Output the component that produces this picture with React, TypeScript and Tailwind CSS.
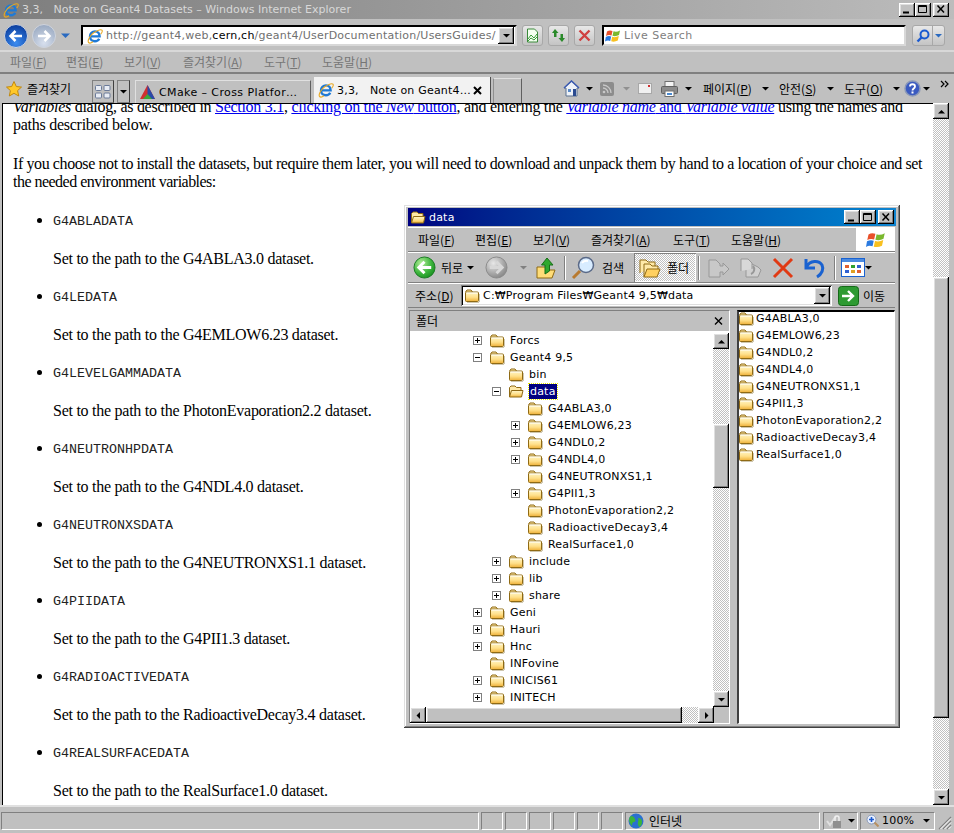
import React from "react";

const ui = "font-['DejaVu_Sans','Noto_Sans_CJK_KR',sans-serif] text-[11px] tracking-[0.2px] whitespace-nowrap leading-none";
const ko = "font-['Noto_Sans_CJK_KR','DejaVu_Sans',sans-serif] text-[12px] whitespace-nowrap leading-none";
const raised = "shadow-[inset_-1px_-1px_0_#000,inset_1px_1px_0_#fff,inset_-2px_-2px_0_#808080,inset_2px_2px_0_#dfdfdf] bg-[#c0c0c0]";
const sunken = "shadow-[inset_1px_1px_0_#808080,inset_-1px_-1px_0_#fff,inset_2px_2px_0_#000,inset_-2px_-2px_0_#dfdfdf]";
const checker = "bg-[repeating-conic-gradient(#c0c0c0_0_25%,#fff_0_50%)] bg-[length:2px_2px]";

function Folder({ open = false, className = "" }: { open?: boolean; className?: string }) {
  return (
    <svg width="16" height="15" viewBox="0 0 16 15" className={"shrink-0 " + className}>
      <defs>
        <linearGradient id="fg" x1="0" y1="0" x2="0" y2="1">
          <stop offset="0" stopColor="#fff6c8" />
          <stop offset="0.55" stopColor="#ffe08a" />
          <stop offset="1" stopColor="#eeb038" />
        </linearGradient>
      </defs>
      {open ? (
        <>
          <path d="M1.500 13V3.500L3 2h4l1.500 1.500H13V6" fill="#ffe9a8" stroke="#8f6a14" />
          <path d="M1.500 13L3.500 6.500H15L13.500 13Z" fill="url(#fg)" stroke="#8f6a14" />
        </>
      ) : (
        <>
          <path d="M1.500 4L3 2h4l1.500 2" fill="#ffe9a8" stroke="#8f6a14" />
          <rect x="1.500" y="4" width="13" height="9.500" rx="1" fill="url(#fg)" stroke="#8f6a14" />
          <path d="M2.500 5h11" stroke="#fff" />
          <path d="M15.500 6v8M3 14.500h12" stroke="#a09060" strokeOpacity="0.5" />
        </>
      )}
    </svg>
  );
}

function IeLogo({ size = 16 }: { size?: number }) {
  return (
    <svg width={size} height={size} viewBox="0 0 16 16" className="shrink-0">
      <path d="M3.400 8.400h9.200c0-3-1.800-5-4.600-5S3 5.600 3 8.500s2 4.800 4.900 4.800c2 0 3.500-.9 4.300-2.500" fill="none" stroke="#1f7ad6" strokeWidth="2.400" />
      <path d="M1.500 14.500C.3 12.500 3 7 7 4.500S14 1 15 2.200c.7 1-.1 2.600-1.300 4M1.500 14.500c1 1 3 .4 4.500-.7" fill="none" stroke="#e8a820" strokeWidth="1.100" />
    </svg>
  );
}

function Flag({ size = 16 }: { size?: number }) {
  return (
    <svg width={size} height={size} viewBox="0 0 16 16" className="shrink-0">
      <path d="M2 3.500Q4.500 2 7.500 3L6.500 7.500Q3.500 6.500 1 8Z" fill="#e8502a" />
      <path d="M8.500 3.300Q11.500 4.500 15 2.500L14 7Q11 8.800 7.500 7.800Z" fill="#7ab82e" />
      <path d="M.8 9Q3.500 7.500 6.200 8.500L5.200 13Q2.500 12 0 13.500Z" fill="#2a7ae0" />
      <path d="M7.200 8.800Q10.500 9.800 13.800 8L12.800 12.500Q9.500 14.300 6.200 13.300Z" fill="#f8c020" />
    </svg>
  );
}

function Tri({ dir = "down", color = "#000", size = 7 }: { dir?: "up" | "down" | "left" | "right"; color?: string; size?: number }) {
  const d = { down: "M0 2h7L3.500 5.500Z", up: "M0 5.500h7L3.500 2Z", left: "M5 0v7L1.500 3.500Z", right: "M2 0v7l3.500-3.500Z" }[dir];
  return (
    <svg width={size} height={size} viewBox="0 0 7 7" className="shrink-0">
      <path d={d} fill={color} />
    </svg>
  );
}

function SBtn({ dir, w = 16, h = 16 }: { dir: "up" | "down" | "left" | "right"; w?: number; h?: number }) {
  return (
    <div className={raised + " shrink-0 flex items-center justify-center"} style={{ width: w, height: h }}>
      <Tri dir={dir} />
    </div>
  );
}

function CapBtn({ kind }: { kind: "min" | "max" | "close" }) {
  return (
    <div className={raised + " w-[16px] h-[14px] flex items-center justify-center"}>
      <svg width="10" height="9" viewBox="0 0 10 9">
        {kind === "min" && <path d="M1 7.500h6" stroke="#000" strokeWidth="2" />}
        {kind === "max" && <path d="M.5.500h8v7h-8zM.5 1.500h8" fill="none" stroke="#000" />}
        {kind === "close" && <path d="M1.500 .5l6.500 7M8 .5l-6.500 7" stroke="#000" strokeWidth="1.500" />}
      </svg>
    </div>
  );
}

function PlusBox({ minus = false }: { minus?: boolean }) {
  return (
    <svg width="9" height="9" viewBox="0 0 9 9" className="shrink-0">
      <rect x=".5" y=".5" width="8" height="8" fill="#fff" stroke="#808080" />
      <path d={minus ? "M2 4.500h5" : "M2 4.500h5M4.500 2v5"} stroke="#000" />
    </svg>
  );
}

function Circle({ green, dirRight = false, size = 23 }: { green: boolean; dirRight?: boolean; size?: number }) {
  const id = green ? "cg" : "cgr";
  return (
    <svg width={size} height={size} viewBox="0 0 24 24" className="shrink-0">
      <defs>
        <radialGradient id={id} cx="0.35" cy="0.3" r="0.8">
          <stop offset="0" stopColor={green ? "#b4ee9a" : "#e8e8e8"} />
          <stop offset="0.6" stopColor={green ? "#3cb43c" : "#a8a8a8"} />
          <stop offset="1" stopColor={green ? "#148a1c" : "#808080"} />
        </radialGradient>
      </defs>
      <circle cx="12" cy="12" r="11" fill={"url(#" + id + ")"} stroke={green ? "#1a7a22" : "#8a8a8a"} />
      <path d={dirRight ? "M5 12h13M12 6l6 6-6 6" : "M19 12H6M12 6l-6 6 6 6"} fill="none" stroke={green ? "#fff" : "#d8d8d8"} strokeWidth="3" />
    </svg>
  );
}

function IeNav({ right = false }: { right?: boolean }) {
  const id = right ? "nr" : "nl";
  return (
    <svg width="24" height="24" viewBox="0 0 24 24" className="shrink-0">
      <defs>
        <radialGradient id={id} cx="0.5" cy="0.8" r="0.8">
          <stop offset="0" stopColor={right ? "#d8e0ee" : "#3c8cf0"} />
          <stop offset="1" stopColor={right ? "#98a8c0" : "#0a3c9c"} />
        </radialGradient>
      </defs>
      <circle cx="12" cy="12" r="11.500" fill={"url(#" + id + ")"} stroke="#d0d4dc" />
      <path d={right ? "M6 12h11M12.500 7l5 5-5 5" : "M18 12H7M11.500 7l-5 5 5 5"} fill="none" stroke="#fff" strokeWidth="2.500" />
    </svg>
  );
}

const SmallBtn = ({ children, className = "" }: { children: React.ReactNode; className?: string }) => (
  <div className={"w-[21px] h-[21px] rounded-[3px] border border-[#a8a8a8] bg-gradient-to-b from-[#e8e8e8] to-[#c4c4c4] flex items-center justify-center shrink-0 " + className}>
    {children}
  </div>
);

function Acc({ a, k }: { a: string; k: string }) {
  return <>{a}(<u className="underline-offset-1">{k}</u>)</>;
}

type Row = { n: string; l: number; b?: "p" | "m"; open?: boolean; sel?: boolean };
const rows: Row[] = [
  { n: "Forcs", l: 0, b: "p" },
  { n: "Geant4 9,5", l: 0, b: "m" },
  { n: "bin", l: 1 },
  { n: "data", l: 1, b: "m", open: true, sel: true },
  { n: "G4ABLA3,0", l: 2 },
  { n: "G4EMLOW6,23", l: 2, b: "p" },
  { n: "G4NDL0,2", l: 2, b: "p" },
  { n: "G4NDL4,0", l: 2, b: "p" },
  { n: "G4NEUTRONXS1,1", l: 2 },
  { n: "G4PII1,3", l: 2, b: "p" },
  { n: "PhotonEvaporation2,2", l: 2 },
  { n: "RadioactiveDecay3,4", l: 2 },
  { n: "RealSurface1,0", l: 2 },
  { n: "include", l: 1, b: "p" },
  { n: "lib", l: 1, b: "p" },
  { n: "share", l: 1, b: "p" },
  { n: "Geni", l: 0, b: "p" },
  { n: "Hauri", l: 0, b: "p" },
  { n: "Hnc", l: 0, b: "p" },
  { n: "INFovine", l: 0 },
  { n: "INICIS61", l: 0, b: "p" },
  { n: "INITECH", l: 0, b: "p" },
];
const files = ["G4ABLA3,0", "G4EMLOW6,23", "G4NDL0,2", "G4NDL4,0", "G4NEUTRONXS1,1", "G4PII1,3", "PhotonEvaporation2,2", "RadioactiveDecay3,4", "RealSurface1,0"];

const datasets = [
  ["G4ABLADATA", "G4ABLA3.0"],
  ["G4LEDATA", "G4EMLOW6.23"],
  ["G4LEVELGAMMADATA", "PhotonEvaporation2.2"],
  ["G4NEUTRONHPDATA", "G4NDL4.0"],
  ["G4NEUTRONXSDATA", "G4NEUTRONXS1.1"],
  ["G4PIIDATA", "G4PII1.3"],
  ["G4RADIOACTIVEDATA", "RadioactiveDecay3.4"],
  ["G4REALSURFACEDATA", "RealSurface1.0"],
];

const menuItems: [string, string][] = [["파일", "F"], ["편집", "E"], ["보기", "V"], ["즐겨찾기", "A"], ["도구", "T"], ["도움말", "H"]];
const winMenuW = ["ml-[10px] w-[57px]", "w-[58px]", "w-[58px]", "w-[82px]", "w-[58px]", "w-[70px]"];
const topMenuW = ["ml-[10px] w-[56px]", "w-[58px]", "w-[59px]", "w-[81px]", "w-[58px]", ""];

function Explorer() {
  return (
    <div className={"absolute left-[404px] top-[205px] w-[496px] h-[523px] pt-[3px] pr-[5px] pl-[4px] flex flex-col bg-[#c0c0c0] shadow-[inset_-1px_-1px_0_#404040,inset_1px_1px_0_#dfdfdf,inset_-2px_-2px_0_#808080,inset_2px_2px_0_#fff]"}>
      <div className="h-[18px] shrink-0 -mr-[1px] flex items-center bg-gradient-to-r from-[#000080] to-[#1084d0] pl-[2px] pr-[2px]">
        <Folder open />
        <span className={ui + " ml-[3px] text-white"}>data</span>
        <div className="ml-auto flex items-center">
          <CapBtn kind="min" />
          <CapBtn kind="max" />
          <div className="w-[2px]" />
          <CapBtn kind="close" />
        </div>
      </div>
      <div className="h-[25px] mt-[1px] shrink-0 flex items-center border-t border-t-white border-b border-b-[#808080]">
        {menuItems.map(([t, k], i) => (
          <span key={t} className={ko + " text-[#000] " + winMenuW[i]}><Acc a={t} k={k} /></span>
        ))}
        <div className="ml-auto w-[39px] h-full bg-white flex items-center justify-center">
          <Flag size={20} />
        </div>
      </div>
      <div className="h-[31px] shrink-0 flex items-center border-t border-t-white border-b border-b-[#808080] pl-[5px]">
        <Circle green />
        <span className={ko + " ml-[5px] w-[26px]"}>뒤로</span>
        <Tri />
        <div className="ml-[11px]"><Circle green={false} dirRight /></div>
        <div className="ml-[12px]"><Tri color="#808080" /></div>
        <svg width="22" height="24" viewBox="0 0 22 24" className="ml-[8px] shrink-0">
          <path d="M2 22V11h12v3h6l-3 8Z" fill="#ffdd78" stroke="#8f6a14" />
          <path d="M10 18V9H6.500L12 2l6 7h-3.500v6Z" fill="#2fa82f" stroke="#176f17" />
        </svg>
        <div className="ml-[7px] w-px h-[24px] bg-[#808080] border-r border-r-white box-content" />
        <svg width="25" height="25" viewBox="0 0 25 25" className="ml-[5px] shrink-0">
          <path d="M9 16L2 23" stroke="#b87a30" strokeWidth="3" />
          <circle cx="15" cy="10" r="7.500" fill="#d8ecff" stroke="#5a6a88" strokeWidth="1.500" />
          <path d="M11 8q2-3 6-2" stroke="#fff" strokeWidth="2" fill="none" />
        </svg>
        <span className={ko + " ml-[6px] w-[32px]"}>검색</span>
        <div className={"h-[29px] w-[62px] flex items-center pl-[4px] shadow-[inset_1px_1px_0_#808080,inset_-1px_-1px_0_#fff] " + checker}>
          <svg width="23" height="21" viewBox="0 0 23 21" className="shrink-0">
            <path d="M2 16V3h6l2 2h7v4" fill="#ffe9a8" stroke="#8f6a14" />
            <path d="M6 20V7h6l2 2h6v3" fill="#ffe9a8" stroke="#8f6a14" />
            <path d="M6 20l3-8h13l-3 8Z" fill="#ffd060" stroke="#8f6a14" />
          </svg>
          <span className={ko + " ml-[6px]"}>폴더</span>
        </div>
        <div className="ml-[2px] w-px h-[24px] bg-[#808080] border-r border-r-white box-content" />
        <svg width="23" height="22" viewBox="0 0 23 22" className="ml-[7px] shrink-0">
          <path d="M2 20V3h7l4 4v2h3v-3l6 6-6 6v-3H13v5Z" fill="#c8c8c8" stroke="#989898" />
        </svg>
        <svg width="23" height="22" viewBox="0 0 23 22" className="ml-[9px] shrink-0">
          <path d="M7 20V7h6l6 3 3 3-3 7Z" fill="#d0d0d0" stroke="#989898" />
          <path d="M2 14V2h7l4 4v6" fill="#d8d8d8" stroke="#989898" />
          <path d="M14 9a5 5 0 0 1-2 8" fill="none" stroke="#989898" strokeWidth="2" />
        </svg>
        <svg width="22" height="22" viewBox="0 0 22 22" className="ml-[10px] shrink-0">
          <path d="M2 2l18 18M20 2L2 20" stroke="#e03a14" strokeWidth="3" />
        </svg>
        <svg width="23" height="22" viewBox="0 0 23 22" className="ml-[9px] shrink-0">
          <path d="M3 2v9h9M3.500 10C7 3 16 3 19 8c2 4 0 9-5 12" fill="none" stroke="#1a62d0" strokeWidth="3" />
        </svg>
        <div className="ml-[8px] w-px h-[24px] bg-[#808080] border-r border-r-white box-content" />
        <svg width="24" height="20" viewBox="0 0 24 20" className="ml-[5px] shrink-0">
          <rect x=".5" y=".5" width="23" height="18" fill="#fff" stroke="#1a62d0" />
          <rect x="1" y="1" width="22" height="3" fill="#4a8ae0" />
          <path d="M4 7h4v3H4z" fill="#e06030" /><path d="M10 7h4v3h-4z" fill="#30a030" /><path d="M16 7h4v3h-4z" fill="#3060d0" />
          <path d="M4 12h4v3H4z" fill="#3060d0" /><path d="M10 12h4v3h-4z" fill="#e0a020" /><path d="M16 12h4v3h-4z" fill="#e06030" />
        </svg>
        <Tri />
      </div>
      <div className="h-[25px] shrink-0 flex items-center border-t border-t-white border-b border-b-[#808080] pl-[7px]">
        <span className={ko + " w-[46px]"}><Acc a="주소" k="D" /></span>
        <div className={sunken + " bg-white w-[371px] h-[21px] flex items-center pl-[3px] pr-[2px]"}>
          <Folder />
          <span className={ui + " ml-[3px] text-[#000]"}>C:₩Program Files₩Geant4 9,5₩data</span>
          <div className="ml-auto"><SBtn dir="down" w={16} h={17} /></div>
        </div>
        <svg width="21" height="20" viewBox="0 0 21 20" className="ml-[6px] shrink-0">
          <rect x=".5" y=".5" width="20" height="19" rx="3" fill="#2e9a32" stroke="#156a18" />
          <path d="M4 10h11M10 5l5 5-5 5" fill="none" stroke="#fff" strokeWidth="2.400" />
        </svg>
        <span className={ko + " ml-[4px]"}>이동</span>
      </div>
      <div className="flex-1 min-h-0 flex pl-px pt-[2px]">
        <div className={"w-[321px] h-[414px] flex flex-col border border-[#808080] border-r-white border-b-white"}>
          <div className="h-[20px] shrink-0 flex items-center pl-[6px] pr-[6px]">
            <span className={ko}>폴더</span>
            <svg width="9" height="8" viewBox="0 0 9 8" className="ml-auto">
              <path d="M1 .5l7 7M8 .5l-7 7" stroke="#000" strokeWidth="1.400" />
            </svg>
          </div>
          <div className="flex-1 min-h-0 flex bg-white overflow-hidden">
            <div className="flex-1 pt-px overflow-hidden">
              {rows.map((r) => (
                <div key={r.n} className="h-[17px] flex items-center" style={{ paddingLeft: 63 + r.l * 19 }}>
                  <div className="w-[16px] shrink-0 flex">{r.b && <PlusBox minus={r.b === "m"} />}</div>
                  <Folder open={r.open} />
                  <span className={ui + " ml-[5px] " + (r.sel ? "bg-[#000080] text-white outline-1 outline-dotted outline-[#e8e800] px-[1px] py-[2px]" : "text-[#000]")}>{r.n}</span>
                </div>
              ))}
            </div>
            <div className="w-[16px] shrink-0 flex flex-col">
              <div className="h-[2px]" />
              <SBtn dir="up" />
              <div className={checker + " h-[75px]"} />
              <div className={raised + " h-[64px]"} />
              <div className={checker + " flex-1"} />
              <SBtn dir="down" />
            </div>
          </div>
          <div className="h-[16px] shrink-0 flex">
            <SBtn dir="left" />
            <div className={raised + " w-[256px]"} />
            <div className={checker + " w-[16px]"} />
            <SBtn dir="right" />
            <div className="flex-1 bg-[#c0c0c0]" />
          </div>
        </div>
        <div className="w-[7px] shrink-0" />
        <div className={"w-[158px] h-[414px] bg-white border-t-2 border-l-2 border-t-[#000] border-l-[#404040] border-r border-b border-r-white border-b-white"}>
          <div className="-mt-[2px] -ml-px">
            {files.map((f) => (
              <div key={f} className="h-[17px] flex items-center">
                <Folder />
                <span className={ui + " ml-[2px] text-[#000]"}>{f}</span>
              </div>
            ))}
          </div>
        </div>
      </div>
    </div>
  );
}

export default function App() {
  return (
    <div className="relative w-[954px] h-[833px] overflow-hidden bg-[#c0c0c0] flex flex-col font-['Liberation_Serif',serif]">
      {/* title bar */}
      <div className="h-[19px] shrink-0 flex items-center bg-gradient-to-r from-[#7e7e7e] to-[#bcbcbc] pl-[3px] pr-[5px]">
        <IeLogo />
        <span className={ui + " ml-[3px] text-[#d8d8d8] tracking-[0px]"}>3,3,&nbsp;&nbsp;&nbsp;Note on Geant4 Datasets – Windows Internet Explorer</span>
        <div className="ml-auto flex items-center">
          <CapBtn kind="min" />
          <CapBtn kind="max" />
          <div className="w-[2px]" />
          <CapBtn kind="close" />
        </div>
      </div>
      {/* address row */}
      <div className="h-[33px] shrink-0 flex items-center pl-[4px] pt-[2px] border-b-2 border-b-[#d8d8d8]">
        <IeNav />
        <div className="ml-[4px]"><IeNav right /></div>
        <div className="ml-[5px]"><Tri color="#2a6ac0" size={9} /></div>
        <div className={"ml-[11px] w-[436px] h-[21px] bg-white flex items-center pl-[4px] pr-[1px] border-2 border-t-black border-l-black border-r-[#d8d8d8] border-b-[#d8d8d8]"}>
          <IeLogo />
          <span className={ui + " ml-[3px] text-[#707070] tracking-[0.23px]"}>http://geant4,web,<span className="text-black">cern,ch</span>/geant4/UserDocumentation/UsersGuides/</span>
          <div className="ml-auto"><SBtn dir="down" w={16} h={17} /></div>
        </div>
        <SmallBtn className="ml-[5px]">
          <svg width="15" height="15" viewBox="0 0 15 15">
            <path d="M2.500 1h7l3 3v10h-10Z" fill="#f4fff0" stroke="#3a8a3a" />
            <path d="M3 11l3-4 3 3 3-4M3 13l3-3 3 2 3-3" fill="none" stroke="#3a9a3a" />
          </svg>
        </SmallBtn>
        <SmallBtn className="ml-[5px]">
          <svg width="15" height="15" viewBox="0 0 15 15">
            <path d="M4 1l-3 4h2v4h2.500V5h2ZM11 14l3-4h-2V6H9.500v4h-2Z" fill="#2a8a2a" />
          </svg>
        </SmallBtn>
        <SmallBtn className="ml-[5px]">
          <svg width="13" height="13" viewBox="0 0 13 13">
            <path d="M1.500 1.500l10 10M11.500 1.500l-10 10" stroke="#d04040" strokeWidth="2.400" />
          </svg>
        </SmallBtn>
        <div className={"ml-[7px] w-[304px] h-[21px] bg-white flex items-center pl-[1px] border-2 border-t-black border-l-black border-r-[#d8d8d8] border-b-[#d8d8d8]"}>
          <Flag />
          <span className={ui + " ml-[3px] text-[#808080] tracking-[0.45px]"}>Live Search</span>
        </div>
        <div className="ml-[6px] w-[33px] h-[21px] rounded-[3px] border border-[#a8a8a8] bg-gradient-to-b from-[#e8e8e8] to-[#c4c4c4] flex items-center shrink-0">
          <div className="w-[20px] flex justify-center border-r border-r-[#a8a8a8] h-full items-center">
            <svg width="14" height="14" viewBox="0 0 14 14">
              <circle cx="8.500" cy="5.500" r="4" fill="none" stroke="#1a5ad0" strokeWidth="2" />
              <path d="M5.500 8.500L1.500 12.500" stroke="#1a5ad0" strokeWidth="2.400" />
            </svg>
          </div>
          <div className="flex-1 flex justify-center"><Tri color="#2a6ac0" /></div>
        </div>
      </div>
      {/* menu */}
      <div className="h-[22px] shrink-0 flex items-center border-b-2 border-b-[#808080]">
        {menuItems.map(([t, k], i) => (
          <span key={t} className={ko + " text-[#757575] " + topMenuW[i]}><Acc a={t} k={k} /></span>
        ))}
      </div>
      {/* tabs + command bar */}
      <div className="h-[29px] shrink-0 flex items-end relative">
        <div className="self-center ml-[6px]">
          <svg width="16" height="16" viewBox="0 0 16 16"><path d="M8 .5l2.300 5 5.200.6-3.900 3.500 1.100 5.400L8 12.300 3.300 15l1.100-5.400L.5 6.100l5.200-.6Z" fill="#ffc828" stroke="#c08810" /></svg>
        </div>
        <span className={ko + " self-center ml-[5px] w-[65px] text-black"}>즐겨찾기</span>
        <div className="w-[22px] h-[23px] self-end flex items-center justify-center border border-[#808080] border-r-[#404040]">
          <svg width="16" height="14" viewBox="0 0 16 14">
            <rect x=".5" y=".5" width="6" height="5" rx="1" fill="#e8ecf4" stroke="#6a7a98" /><rect x="9" y=".5" width="6" height="5" rx="1" fill="#e8ecf4" stroke="#6a7a98" />
            <rect x=".5" y="8" width="6" height="5" rx="1" fill="#e8ecf4" stroke="#6a7a98" /><rect x="9" y="8" width="6" height="5" rx="1" fill="#e8ecf4" stroke="#6a7a98" />
          </svg>
        </div>
        <div className="ml-[3px] w-[13px] h-[23px] flex items-center justify-center border border-[#808080] border-r-[#404040]"><Tri /></div>
        <div className="ml-[5px] w-[176px] h-[23px] flex items-center pl-[3px] border border-[#909090] border-t-[#e0e0e0] border-l-[#e0e0e0] border-r-[#606060] border-b-0">
          <svg width="17" height="17" viewBox="0 0 17 17" className="shrink-0">
            <path d="M8.500 1L16 15H1Z" fill="#d03030" /><path d="M8.500 1L16 15H8.500Z" fill="#2a4aa8" /><path d="M4 15l4.500-5 4.500 5Z" fill="#3aa83a" />
          </svg>
          <span className={ui + " ml-[3px] text-black tracking-[0.4px]"}>CMake – Cross Platfor…</span>
        </div>
        <div className="ml-[3px] w-[177px] h-[26px] bg-[#f2f2f2] flex items-center pl-[4px] border-r border-r-[#505050]">
          <IeLogo />
          <span className={ui + " ml-[3px] text-black tracking-[0.1px]"}>3,3,&nbsp;&nbsp;&nbsp;Note on Geant4…</span>
          <svg width="9" height="9" viewBox="0 0 9 9" className="ml-auto mr-[8px]"><path d="M1 1l7 7M8 1L1 8" stroke="#000" strokeWidth="2" /></svg>
        </div>
        <div className="ml-[2px] w-[29px] h-[25px] border border-[#909090] border-r-[#606060] border-b-0 border-t-[#e0e0e0]" />
        <div className="self-center ml-[41px] flex items-center">
          <svg width="17" height="17" viewBox="0 0 17 17" className="shrink-0">
            <path d="M8.500 1L1 8h2v8h11V8h2Z" fill="#eef2f8" stroke="#5a7090" />
            <path d="M1 8l7.500-7L16 8" fill="none" stroke="#3a5ab0" strokeWidth="1.500" />
            <rect x="10" y="9" width="3" height="7" fill="#2a4a90" /><rect x="5" y="9" width="3" height="3" fill="#5a8ac8" />
          </svg>
          <div className="ml-[6px]"><Tri /></div>
          <div className="ml-[7px] w-[14px] h-[14px] rounded-[2px] bg-[#8c8c8c] flex items-center justify-center">
            <svg width="10" height="10" viewBox="0 0 10 10"><circle cx="2" cy="8" r="1.300" fill="#c8c8c8" /><path d="M1 4a5 5 0 0 1 5 5M1 1a8 8 0 0 1 8 8" fill="none" stroke="#c8c8c8" strokeWidth="1.300" /></svg>
          </div>
          <div className="ml-[9px]"><Tri color="#909090" /></div>
          <svg width="14" height="11" viewBox="0 0 14 11" className="ml-[8px] shrink-0">
            <rect x=".5" y=".5" width="13" height="10" fill="#f0f0f0" stroke="#a8a8a8" /><rect x="10" y="2" width="2" height="2" fill="#d03030" />
          </svg>
          <svg width="17" height="16" viewBox="0 0 17 16" className="ml-[9px] shrink-0">
            <rect x="4" y=".5" width="9" height="5" fill="#f4f4f4" stroke="#707070" />
            <rect x=".5" y="5.500" width="16" height="7" rx="1" fill="#8c8c8c" stroke="#606060" />
            <rect x="4" y="10" width="9" height="5.500" fill="#fff" stroke="#707070" /><rect x="6" y="12" width="5" height="2" fill="#4a8ad0" />
          </svg>
          <div className="ml-[7px]"><Tri /></div>
          <span className={ko + " ml-[11px] w-[59px] text-black"}><Acc a="페이지" k="P" /></span>
          <Tri />
          <span className={ko + " ml-[10px] w-[48px] text-black"}><Acc a="안전" k="S" /></span>
          <Tri />
          <span className={ko + " ml-[10px] w-[49px] text-black"}><Acc a="도구" k="O" /></span>
          <Tri />
          <svg width="17" height="17" viewBox="0 0 17 17" className="ml-[4px] shrink-0">
            <circle cx="8.500" cy="8.500" r="7.500" fill="#3a5ac0" stroke="#8a98b8" strokeWidth="1.500" />
            <path d="M6 6.500c0-3 5-3 5 0 0 2-2.500 2-2.500 4" fill="none" stroke="#fff" strokeWidth="1.800" />
            <rect x="7.500" y="11.500" width="2" height="2" fill="#fff" />
          </svg>
          <div className="ml-[2px]"><Tri /></div>
          <svg width="9" height="8" viewBox="0 0 9 8" className="ml-[10px] -mt-[10px] shrink-0"><path d="M1 1l3 3-3 3M5 1l3 3-3 3" fill="none" stroke="#000" strokeWidth="1.200" /></svg>
        </div>
      </div>
      {/* content */}
      <div className="h-[702px] shrink-0 flex pl-[2px] pr-[5px]">
        <div className="flex-1 bg-white border-l border-l-black border-t border-t-black overflow-hidden text-[16px] leading-[18px] tracking-[-0.26px] text-black pl-[10px]">
          <div className="-mt-[6px] whitespace-nowrap tracking-[-0.28px]">
            <i>Variables</i> dialog, as described in <a className="text-[#0000ee] underline">Section 3.1</a>, <a className="text-[#0000ee] underline">clicking on the <i>New</i> button</a>, and entering the <a className="text-[#0000ee] underline"><i>Variable name</i> and <i>Variable value</i></a> using the names and
          </div>
          <div>paths described below.</div>
          <div className="mt-[21px] whitespace-nowrap tracking-[-0.4px]">If you choose not to install the datasets, but require them later, you will need to download and unpack them by hand to a location of your choice and set</div>
          <div className="tracking-[-0.52px]">the needed environment variables:</div>
          <ul className="mt-[20px] ml-[40px] list-disc">
            {datasets.map(([k, v]) => (
              <li key={k} className="mb-[19px]">
                <span className="block font-['Liberation_Mono',monospace] text-[13.33px] leading-[18px] tracking-[0px] text-[#222]">{k}</span>
                <div className="mt-[19px]">Set to the path to the {v} dataset.</div>
              </li>
            ))}
          </ul>
        </div>
        <div className="w-[16px] shrink-0 flex flex-col">
          <SBtn dir="up" />
          <div className={checker + " h-[158px]"} />
          <div className={raised + " h-[441px]"} />
          <div className={checker + " flex-1"} />
          <SBtn dir="down" />
        </div>
      </div>
      {/* status */}
      <div className="flex-1 flex items-center border-t-2 border-t-[#e0e0e0] pl-[1px] pt-[1px] gap-[2px]">
        <div className="w-[478px] h-[18px] border border-[#808080] border-r-white border-b-white" />
        {[0, 1, 2, 3, 4, 5].map((i) => (
          <div key={i} className="w-[22px] h-[18px] border border-[#808080] border-r-white border-b-white" />
        ))}
        <div className="w-[195px] h-[18px] flex items-center pl-[2px] border border-[#808080] border-r-white border-b-white">
          <svg width="16" height="16" viewBox="0 0 16 16" className="shrink-0">
            <circle cx="8" cy="8" r="7.500" fill="#2a70d0" />
            <path d="M3 3q3 0 4 3t-1 3-2 4q-3-3-3-6t2-4ZM10 5q4 0 4 4t-3 5q-2-3-1-5t0-4Z" fill="#3cb43c" />
          </svg>
          <span className={ko + " ml-[5px] text-black"}>인터넷</span>
        </div>
        <div className="ml-px w-[35px] h-[18px] flex items-center pl-[2px] border border-[#808080] border-r-white border-b-white">
          <svg width="16" height="16" viewBox="0 0 16 16" className="shrink-0">
            <path d="M1 8l3 4 6-9" fill="none" stroke="#e0e0e0" strokeWidth="2" />
            <rect x="7" y="8" width="8" height="7" fill="#909090" /><path d="M9 8V5a2 2 0 0 1 4 0v3" fill="none" stroke="#f0f0f0" strokeWidth="1.500" />
          </svg>
          <div className="ml-auto mr-[2px]"><Tri /></div>
        </div>
        <div className="w-[75px] h-[18px] flex items-center pl-[5px] border border-[#808080] border-r-white border-b-white">
          <svg width="13" height="13" viewBox="0 0 13 13" className="shrink-0">
            <circle cx="5.500" cy="5.500" r="4.500" fill="#e8f0ff" stroke="#8a9ab8" /><path d="M3 5.500h5M5.500 3v5" stroke="#1a5ad0" strokeWidth="1.600" /><path d="M8.500 8.500l4 4" stroke="#b89060" strokeWidth="2" />
          </svg>
          <span className={ui + " ml-[3px] text-black"}>100%</span>
          <div className="ml-auto mr-[4px]"><Tri /></div>
        </div>
        <svg width="14" height="14" viewBox="0 0 14 14" className="self-end mb-[3px] ml-px shrink-0">
          <path d="M13 1L1 13M13 5l-8 8M13 9l-4 4" stroke="#808080" strokeWidth="1.200" />
          <path d="M13 2.500L2.500 13M13 6.500L6.500 13M13 10.500L10.500 13" stroke="#fff" strokeWidth="1" />
        </svg>
      </div>
      <Explorer />
    </div>
  );
}
